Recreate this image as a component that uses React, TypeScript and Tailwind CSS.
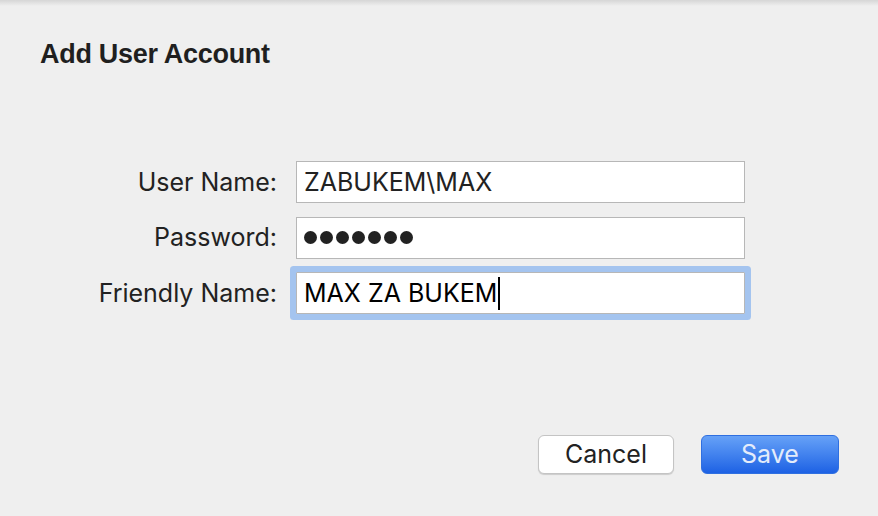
import React from "react";

export default function App() {
  const font = { fontFamily: "Inter, 'Helvetica Neue', Arial, sans-serif" };
  return (
    <div className="w-[878px] h-[516px] bg-[#efefef] relative overflow-hidden text-[#222]" style={font}>
      <div className="h-[6px] bg-gradient-to-b from-[#d6d6d6] to-[#efefef]" />
      <div className="pl-[40px] pt-[32px] text-[27px] leading-[32px] font-bold tracking-[-0.3px] text-[#1f1f1f]" style={{ fontFamily: "'Liberation Sans', Arial, sans-serif" }}>
        Add User Account
      </div>
      <div className="mt-[91px] grid grid-cols-[277px_449px] gap-x-[19px] gap-y-[13.5px] items-center text-[25px]">
        <div className="text-right leading-none">User Name:</div>
        <div className="h-[42px] bg-white border border-[#b7b7b7] flex items-center pl-[7px] leading-none">ZABUKEM\MAX</div>
        <div className="text-right leading-none">Password:</div>
        <div className="h-[42px] bg-white border border-[#b7b7b7] flex items-center pl-[7px] gap-[3px]">
          {Array.from({ length: 7 }).map((_, i) => (
            <span key={i} className="w-[13px] h-[13px] rounded-full bg-[#222]" />
          ))}
        </div>
        <div className="text-right leading-none">Friendly Name:</div>
        <div className="h-[42px] bg-white border border-[#b7b7b7] flex items-center pl-[7px] leading-none text-black ring-[6px] ring-[#a4c4ef] rounded-[1px]">
          MAX ZA BUKEM<span className="inline-block w-[2px] h-[33px] bg-black ml-[1px]" />
        </div>
      </div>
      <div className="absolute left-0 right-0 top-[435px] flex justify-end pr-[39px] gap-[27px] text-[25px]">
        <button className="w-[136px] h-[39px] bg-white border border-[#c4c4c4] rounded-[6px] shadow-[0_1px_1px_rgba(0,0,0,0.15)] text-[#222] leading-none">Cancel</button>
        <button className="w-[138px] h-[39px] rounded-[6px] bg-gradient-to-b from-[#66a1f7] to-[#1d61e4] border border-[#2f6fe0] text-[#e4ecfb] leading-none">Save</button>
      </div>
    </div>
  );
}
